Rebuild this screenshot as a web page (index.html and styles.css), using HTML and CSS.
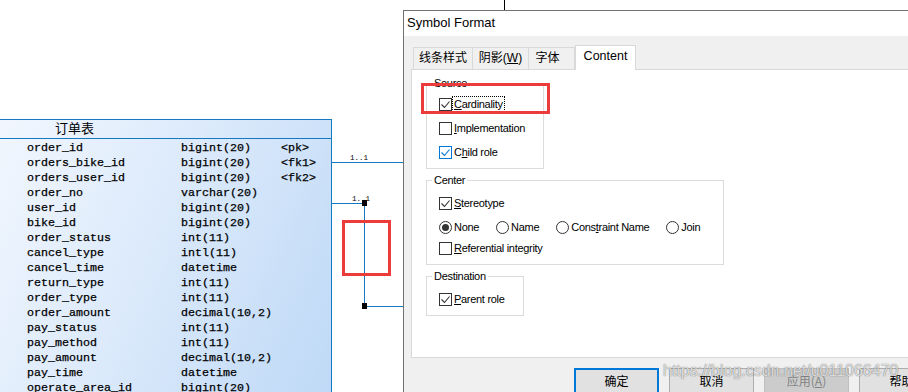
FILE: index.html
```html
<!DOCTYPE html>
<html lang="zh-CN">
<head>
    <meta charset="UTF-8">
    <title>Symbol Format</title>
    <link rel="stylesheet" href="styles.css">
</head>
<body>
    <!-- Diagram canvas -->
    <div class="canvas">
        <svg class="links" width="908" height="392" viewBox="0 0 908 392">
            <line class="pin" x1="504.5" y1="0" x2="504.5" y2="10"/>
            <line x1="332" y1="162.5" x2="403" y2="162.5"/>
            <line x1="332" y1="203.5" x2="363" y2="203.5"/>
            <line x1="364.5" y1="203" x2="364.5" y2="306"/>
            <line x1="365" y1="306.5" x2="403" y2="306.5"/>
            <rect x="362" y="200" width="5" height="6"/>
            <rect x="362" y="303" width="5" height="6"/>
            <text x="350" y="160">1..1</text>
            <text x="352" y="201">1..1</text>
        </svg>

        <div class="entity">
            <div class="entity-name">订单表</div>
            <div class="entity-cols">
                <span>order_id</span><span>bigint(20)</span><span>&lt;pk&gt;</span>
                <span>orders_bike_id</span><span>bigint(20)</span><span>&lt;fk1&gt;</span>
                <span>orders_user_id</span><span>bigint(20)</span><span>&lt;fk2&gt;</span>
                <span>order_no</span><span>varchar(20)</span><span></span>
                <span>user_id</span><span>bigint(20)</span><span></span>
                <span>bike_id</span><span>bigint(20)</span><span></span>
                <span>order_status</span><span>int(11)</span><span></span>
                <span>cancel_type</span><span>intl(11)</span><span></span>
                <span>cancel_time</span><span>datetime</span><span></span>
                <span>return_type</span><span>int(11)</span><span></span>
                <span>order_type</span><span>int(11)</span><span></span>
                <span>order_amount</span><span>decimal(10,2)</span><span></span>
                <span>pay_status</span><span>int(11)</span><span></span>
                <span>pay_method</span><span>int(11)</span><span></span>
                <span>pay_amount</span><span>decimal(10,2)</span><span></span>
                <span>pay_time</span><span>datetime</span><span></span>
                <span>operate_area_id</span><span>bigint(20)</span><span></span>
            </div>
        </div>
    </div>

    <!-- Symbol Format dialog -->
    <div class="dialog">
        <div class="dialog-title">Symbol Format</div>
        <div class="tabs">
            <div class="tab t1">线条样式</div>
            <div class="tab t2">阴影(<u>W</u>)</div>
            <div class="tab t3">字体</div>
            <div class="tab t4 active">Content</div>
        </div>
        <div class="panel">
            <fieldset class="group source">
                <legend>Source</legend>
                <div class="row">
                    <svg class="cb" viewBox="0 0 13 13"><rect x="0.5" y="0.5" width="12" height="12"/><path d="M2.5 6.5l3 3 5-6"/></svg>
                    <span class="focus"><u>C</u>ardinality</span>
                </div>
                <div class="row">
                    <svg class="cb" viewBox="0 0 13 13"><rect x="0.5" y="0.5" width="12" height="12"/></svg>
                    <span><u>I</u>mplementation</span>
                </div>
                <div class="row">
                    <svg class="cb hot" viewBox="0 0 13 13"><rect x="0.5" y="0.5" width="12" height="12"/><path d="M2.5 6.5l3 3 5-6"/></svg>
                    <span>C<u>h</u>ild role</span>
                </div>
            </fieldset>

            <fieldset class="group center">
                <legend>Center</legend>
                <div class="row">
                    <svg class="cb" viewBox="0 0 13 13"><rect x="0.5" y="0.5" width="12" height="12"/><path d="M2.5 6.5l3 3 5-6"/></svg>
                    <span><u>S</u>tereotype</span>
                </div>
                <div class="row radios">
                    <div class="radio">
                        <svg class="rb" viewBox="0 0 13 13"><circle cx="6.5" cy="6.5" r="6"/><circle class="dot" cx="6.5" cy="6.5" r="3.5"/></svg>
                        <span>None</span>
                    </div>
                    <div class="radio">
                        <svg class="rb" viewBox="0 0 13 13"><circle cx="6.5" cy="6.5" r="6"/></svg>
                        <span>Name</span>
                    </div>
                    <div class="radio">
                        <svg class="rb" viewBox="0 0 13 13"><circle cx="6.5" cy="6.5" r="6"/></svg>
                        <span>Cons<u>t</u>raint Name</span>
                    </div>
                    <div class="radio">
                        <svg class="rb" viewBox="0 0 13 13"><circle cx="6.5" cy="6.5" r="6"/></svg>
                        <span>Join</span>
                    </div>
                </div>
                <div class="row tight">
                    <svg class="cb" viewBox="0 0 13 13"><rect x="0.5" y="0.5" width="12" height="12"/></svg>
                    <span><u>R</u>eferential integrity</span>
                </div>
            </fieldset>

            <fieldset class="group destination">
                <legend>Destination</legend>
                <div class="row">
                    <svg class="cb" viewBox="0 0 13 13"><rect x="0.5" y="0.5" width="12" height="12"/><path d="M2.5 6.5l3 3 5-6"/></svg>
                    <span><u>P</u>arent role</span>
                </div>
            </fieldset>
        </div>
        <div class="buttons">
            <button class="btn default">确定</button>
            <button class="btn">取消</button>
            <button class="btn disabled">应用(<u>A</u>)</button>
            <button class="btn">帮助</button>
        </div>
    </div>

    <!-- annotations -->
    <div class="mark mark-card"></div>
    <div class="mark mark-link"></div>
    <div class="watermark">https://blog.csdn.net/u011066470</div>
</body>
</html>
```

FILE: styles.css
```css
* {
    margin: 0;
    padding: 0;
    box-sizing: border-box;
}
body {
    position: relative;
    width: 908px;
    height: 392px;
    overflow: hidden;
    background: #fff;
    font-family: "Liberation Sans", "Noto Sans CJK SC", sans-serif;
    font-size: 11px;
    color: #000;
}

/* Canvas */
.canvas {
    position: absolute;
    left: 0;
    top: 0;
    width: 908px;
    height: 392px;
}
.links {
    position: absolute;
    left: 0;
    top: 0;
}
.links line {
    stroke: #1479c0;
    stroke-width: 1;
}
.links .pin {
    stroke: #000;
}
.links rect {
    fill: #000;
}
.links text {
    font-family: "Liberation Mono", monospace;
    font-size: 7.5px;
    fill: #000;
}

/* Entity table */
.entity {
    position: absolute;
    left: -10px;
    top: 119px;
    width: 342px;
    height: 300px;
    border: 1px solid #1479c0;
    background: linear-gradient(115deg, #f2f7fe 0%, #dceafb 45%, #bdd8f6 100%);
}
.entity-name {
    height: 19px;
    line-height: 16px;
    padding-left: 64px;
    border-bottom: 1px solid #1479c0;
    font-family: "Noto Sans CJK SC", sans-serif;
    font-size: 13px;
}
.entity-cols {
    display: grid;
    grid-template-columns: 154px 100px 1fr;
    padding: 2px 0 0 36px;
    font-family: "Liberation Mono", monospace;
    font-size: 11.67px;
    line-height: 15px;
    white-space: nowrap;
    -webkit-text-stroke: 0.25px #000;
}

/* Dialog */
.dialog {
    position: absolute;
    left: 403px;
    top: 10px;
    width: 560px;
    height: 400px;
    border: 1px solid #707070;
    background: #f0f0f0;
}
.dialog-title {
    height: 25px;
    line-height: 24px;
    padding-left: 3px;
    background: #fff;
    font-size: 13px;
}
.tabs {
    display: flex;
    align-items: flex-end;
    height: 33px;
    padding-top: 9px;
    margin-left: 9px;
    font-size: 12px;
}
.tab {
    height: 22px;
    line-height: 21px;
    text-align: center;
    border: 1px solid #d9d9d9;
    border-bottom: none;
    border-right: none;
    background: #f0f0f0;
}
.t1 { width: 59px; }
.t2 { width: 56px; }
.t3 { width: 47px; padding-right: 8px; border-right: 1px solid #d9d9d9; }
.t4 { width: 61px; font-size: 12.5px; }
.tab.active {
    position: relative;
    z-index: 1;
    height: 25px;
    margin-bottom: -1px;
    border: 1px solid #d9d9d9;
    border-bottom: none;
    background: #fff;
}
.panel {
    width: 600px;
    height: 289px;
    margin-left: 7px;
    padding: 6px 0 0 14px;
    background: #fff;
    border: 1px solid #d9d9d9;
}

/* Group boxes */
.group {
    border: 1px solid #dcdcdc;
    padding: 2px 0 4px 12px;
    letter-spacing: -0.3px;
}
.group legend {
    margin-left: -7px;
    padding: 0 2px;
    line-height: 14px;
}
.source { width: 118px; }
.center { width: 298px; margin-top: 4px; padding-top: 4px; }
.destination { width: 98px; margin-top: 4px; padding-top: 4px; }

.row {
    display: flex;
    align-items: center;
    height: 24px;
    white-space: nowrap;
}
.row.tight {
    margin-top: -3px;
}
.cb, .rb {
    flex: none;
    width: 13px;
    height: 13px;
    margin-right: 2px;
}
.cb rect {
    fill: #fff;
    stroke: #333;
}
.cb path {
    fill: none;
    stroke: #333;
    stroke-width: 1.1;
}
.cb.hot rect,
.cb.hot path {
    stroke: #0078d7;
}
.rb circle {
    fill: #fff;
    stroke: #333;
}
.rb .dot {
    fill: #333;
    stroke: none;
}
.radios {
    gap: 17px;
}
.radio {
    display: flex;
    align-items: center;
}
.focus {
    outline: 1px dotted #000;
    outline-offset: 1px;
}

/* Buttons */
.buttons {
    display: flex;
    gap: 10px;
    margin: 10px 0 0 170px;
}
.btn {
    width: 85px;
    height: 26px;
    border: 1px solid #adadad;
    background: #e1e1e1;
    font-family: "Noto Sans CJK SC", sans-serif;
    font-size: 12px;
    line-height: 22px;
    color: #000;
}
.btn.default {
    border: 2px solid #0078d7;
}
.btn.disabled {
    background: #cccccc;
    border-color: #bfbfbf;
    color: #838383;
}

/* Annotations */
.mark {
    position: absolute;
    border: 3px solid #eb3b3b;
    z-index: 5;
}
.mark-card {
    left: 421px;
    top: 83px;
    width: 129px;
    height: 31px;
}
.mark-link {
    left: 342px;
    top: 220px;
    width: 49px;
    height: 56px;
}
.watermark {
    position: absolute;
    left: 663px;
    top: 362px;
    z-index: 6;
    font-family: "Liberation Sans", sans-serif;
    font-size: 16px;
    color: rgba(255, 255, 255, 0.75);
    text-shadow: 0 0 1px rgba(60, 60, 60, 0.6), 0 0 1px rgba(60, 60, 60, 0.4);
    white-space: nowrap;
}
```
